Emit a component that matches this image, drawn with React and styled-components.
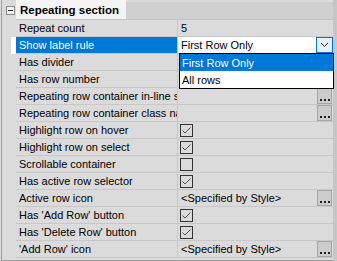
import React from 'react';
import styled, { createGlobalStyle } from 'styled-components';

const Global = createGlobalStyle`
  html, body { margin: 0; padding: 0; background: #f0f0f0; }
  body { font-family: "Liberation Sans", Arial, sans-serif; font-size: 11px; color: #000; }
`;

const Frame = styled.div`
  position: relative;
  width: 337px;
  height: 261px;
  overflow: hidden;
  display: flex;
  background: #dbdbdb;
`;

const Grid = styled.div`
  flex: 1;
  display: flex;
  flex-direction: column;
  margin-left: 1px;
  border-left: 1px solid #a0a0a0;
  border-bottom: 1px solid #a0a0a0;
`;

const Edge = styled.div`
  width: 4px;
  background: #c6c6c6;
`;

const HeaderRow = styled.div`
  display: grid;
  grid-template-columns: 14px 1fr;
  height: 20px;
`;

const Gutter = styled.div`
  display: flex;
  align-items: center;
  justify-content: center;
  background: ${p => (p.$selected ? 'linear-gradient(to right, transparent 9px, #fff 9px)' : 'transparent')};
`;

const MinusBox = styled.div`
  width: 7px;
  height: 7px;
  border: 1px solid #8c8c8c;
  background: #f2f2f2;
  display: flex;
  align-items: center;
  justify-content: center;
  margin-left: 2px;
  &::before {
    content: '';
    width: 5px;
    height: 1px;
    background: #333;
  }
`;

const HeaderBand = styled.div`
  display: flex;
  align-items: stretch;
  background: #d0d0d0;
  border-top: 2px solid #dcdcdc;
  border-bottom: 1px solid #c4c4c4;
`;

const HeaderTitle = styled.div`
  background: #f4f4f4;
  margin-top: -2px;
  padding: 0 7px 0 4px;
  display: flex;
  align-items: center;
  font-weight: bold;
  font-size: 11.5px;
`;

const Row = styled.div`
  display: grid;
  grid-template-columns: 14px 161px 1px 1fr;
  height: 17px;
`;

const Label = styled.div`
  display: flex;
  align-items: center;
  padding-left: 3px;
  white-space: nowrap;
  overflow: hidden;
  border-bottom: 1px solid #c8c8c8;
  background: ${p => (p.$selected ? '#0078d7' : 'transparent')};
  color: ${p => (p.$selected ? '#fff' : '#000')};
`;

const Divider = styled.div`
  background: #c8c8c8;
`;

const Value = styled.div`
  display: flex;
  align-items: center;
  padding-left: ${p => (p.$check ? '2px' : '3px')};
  padding-right: 0;
  white-space: nowrap;
  overflow: hidden;
  border-bottom: 1px solid #c8c8c8;
  background: ${p => (p.$selected ? '#fff' : 'transparent')};
`;

const ValueText = styled.span`
  flex: 1;
`;

const CheckBox = styled.div`
  width: 11px;
  height: 11px;
  border: 1px solid #333;
  display: flex;
  align-items: center;
  justify-content: center;
`;

const EllipsisButton = styled.div`
  width: 13px;
  height: 13px;
  border: 1px solid #a6a6a6;
  background: #cccccc;
  display: flex;
  align-items: flex-end;
  justify-content: center;
  gap: 2px;
  padding-bottom: 1px;
  box-sizing: content-box;
  margin-right: 1px;
`;

const Dot = styled.span`
  width: 2px;
  height: 2px;
  background: #222;
  margin-bottom: 1px;
`;

const ComboButton = styled.div`
  width: 15px;
  height: 14px;
  border: 1px solid #0078d7;
  background: #e5f1fb;
  display: flex;
  align-items: center;
  justify-content: center;
`;

const DropList = styled.div`
  position: absolute;
  left: 179px;
  top: 53px;
  width: 153px;
  border: 1px solid #000;
  background: #fff;
  display: flex;
  flex-direction: column;
`;

const DropItem = styled.div`
  height: 17px;
  display: flex;
  align-items: center;
  padding-left: 2px;
  background: ${p => (p.$active ? '#0078d7' : '#fff')};
  color: ${p => (p.$active ? '#fff' : '#000')};
`;

const Check = () => (
  <svg width="11" height="11" viewBox="0 0 11 11">
    <polyline points="1.5,5.5 4,8 9.5,2.5" fill="none" stroke="#555" strokeWidth="1" />
  </svg>
);

const Chevron = () => (
  <svg width="9" height="6" viewBox="0 0 9 6">
    <polyline points="1,1 4.5,4.5 8,1" fill="none" stroke="#222" strokeWidth="1" />
  </svg>
);

const Ellipsis = () => (
  <EllipsisButton>
    <Dot />
    <Dot />
    <Dot />
  </EllipsisButton>
);

const rows = [
  { label: 'Repeat count', text: '5' },
  { label: 'Show label rule', text: 'First Row Only', selected: true, combo: true },
  { label: 'Has divider' },
  { label: 'Has row number' },
  { label: 'Repeating row container in-line style', ellipsis: true },
  { label: 'Repeating row container class name', ellipsis: true },
  { label: 'Highlight row on hover', check: true, checked: true },
  { label: 'Highlight row on select', check: true, checked: true },
  { label: 'Scrollable container', check: true, checked: false },
  { label: 'Has active row selector', check: true, checked: true },
  { label: 'Active row icon', text: '<Specified by Style>', ellipsis: true },
  { label: "Has 'Add Row' button", check: true, checked: true },
  { label: "Has 'Delete Row' button", check: true, checked: true },
  { label: "'Add Row' icon", text: '<Specified by Style>', ellipsis: true },
];

export default function App() {
  return (
    <>
      <Global />
      <Frame>
        <Grid>
          <HeaderRow>
            <Gutter>
              <MinusBox />
            </Gutter>
            <HeaderBand>
              <HeaderTitle>Repeating section</HeaderTitle>
            </HeaderBand>
          </HeaderRow>
          {rows.map(r => (
            <Row key={r.label}>
              <Gutter $selected={r.selected} />
              <Label $selected={r.selected}>{r.label}</Label>
              <Divider />
              <Value $selected={r.selected} $check={r.check}>
                {r.check ? (
                  <CheckBox>{r.checked && <Check />}</CheckBox>
                ) : (
                  <ValueText>{r.text || ''}</ValueText>
                )}
                {r.ellipsis && <Ellipsis />}
                {r.combo && (
                  <ComboButton>
                    <Chevron />
                  </ComboButton>
                )}
              </Value>
            </Row>
          ))}
        </Grid>
        <Edge />
        <DropList>
          <DropItem $active>First Row Only</DropItem>
          <DropItem>All rows</DropItem>
        </DropList>
      </Frame>
    </>
  );
}
